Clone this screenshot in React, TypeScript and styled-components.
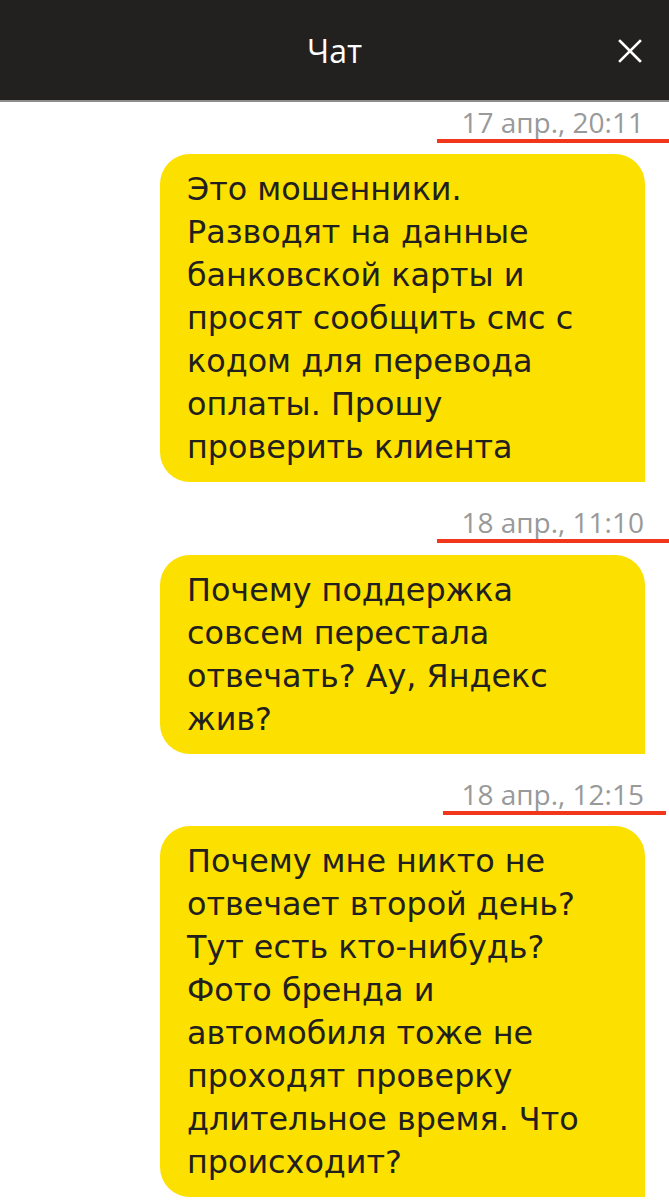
import styled, { createGlobalStyle } from 'styled-components';

const GlobalStyle = createGlobalStyle`
  html, body {
    margin: 0;
    padding: 0;
    background: #ffffff;
  }
  body {
    font-family: "Open Sans", "Noto Sans", sans-serif;
    -webkit-font-smoothing: antialiased;
  }
`;

const Screen = styled.div`
  width: 669px;
  height: 1200px;
  overflow: hidden;
  display: flex;
  flex-direction: column;
  background: #ffffff;
`;

const Header = styled.header`
  position: relative;
  flex: 0 0 auto;
  height: 100px;
  background: #22211f;
  border-bottom: 2px solid #8c8c8c;
  display: flex;
  align-items: center;
  justify-content: center;
`;

const Title = styled.h1`
  margin: 0;
  color: #ffffff;
  font-size: 32px;
  font-weight: 500;
`;

const CloseButton = styled.button`
  position: absolute;
  right: 26px;
  top: 38px;
  width: 26px;
  height: 26px;
  padding: 0;
  border: 0;
  background: none;
  display: flex;
  align-items: center;
  justify-content: center;
`;

const Feed = styled.main`
  flex: 1 1 auto;
  display: flex;
  flex-direction: column;
  padding-top: 3px;
`;

const Group = styled.section`
  display: flex;
  flex-direction: column;
  align-items: flex-end;
`;

const StampText = styled.span`
  padding-right: 25px;
  color: #999999;
  font-size: 28px;
  font-weight: 400;
  line-height: 34px;
`;

const Mark = styled.div<{ $width: number; $right: number }>`
  width: ${(p) => p.$width}px;
  height: 4px;
  margin-right: ${(p) => p.$right}px;
  background: #f2361c;
`;

const Bubble = styled.div<{ $gap: number }>`
  width: 485px;
  box-sizing: border-box;
  margin: ${(p) => p.$gap}px 24px 23px 0;
  padding: 13px 12px 14px 27px;
  background: #fce000;
  border-radius: 30px 30px 0 30px;
  color: #21201f;
  font-family: "DejaVu Sans", "Open Sans", sans-serif;
  font-size: 31.8px;
  line-height: 43px;
`;

const Line = styled.div`
  white-space: nowrap;
`;

const Footer = styled.div`
  margin-top: auto;
  height: 3px;
  border-top: 2px solid #e6e6e6;
`;

type Message = {
  time: string;
  mark: number;
  markRight: number;
  gap: number;
  lines: string[];
};

const messages: Message[] = [
  {
    time: '17 апр., 20:11',
    mark: 232,
    markRight: 0,
    gap: 11,
    lines: [
      'Это мошенники.',
      'Разводят на данные',
      'банковской карты и',
      'просят сообщить смс с',
      'кодом для перевода',
      'оплаты. Прошу',
      'проверить клиента',
    ],
  },
  {
    time: '18 апр., 11:10',
    mark: 232,
    markRight: 0,
    gap: 12,
    lines: ['Почему поддержка', 'совсем перестала', 'отвечать? Ау, Яндекс', 'жив?'],
  },
  {
    time: '18 апр., 12:15',
    mark: 223,
    markRight: 3,
    gap: 11,
    lines: [
      'Почему мне никто не',
      'отвечает второй день?',
      'Тут есть кто-нибудь?',
      'Фото бренда и',
      'автомобиля тоже не',
      'проходят проверку',
      'длительное время. Что',
      'происходит?',
    ],
  },
];

export default function App() {
  return (
    <>
      <GlobalStyle />
      <Screen>
        <Header>
          <Title>Чат</Title>
          <CloseButton aria-label="Закрыть">
            <svg width="24" height="24" viewBox="0 0 24 24">
              <path d="M2 2 L22 22 M22 2 L2 22" stroke="#ffffff" strokeWidth="2.6" strokeLinecap="square" />
            </svg>
          </CloseButton>
        </Header>
        <Feed>
          {messages.map((m) => (
            <Group key={m.time}>
              <StampText>{m.time}</StampText>
              <Mark $width={m.mark} $right={m.markRight} />
              <Bubble $gap={m.gap}>
                {m.lines.map((l) => (
                  <Line key={l}>{l}</Line>
                ))}
              </Bubble>
            </Group>
          ))}
        </Feed>
        <Footer />
      </Screen>
    </>
  );
}
